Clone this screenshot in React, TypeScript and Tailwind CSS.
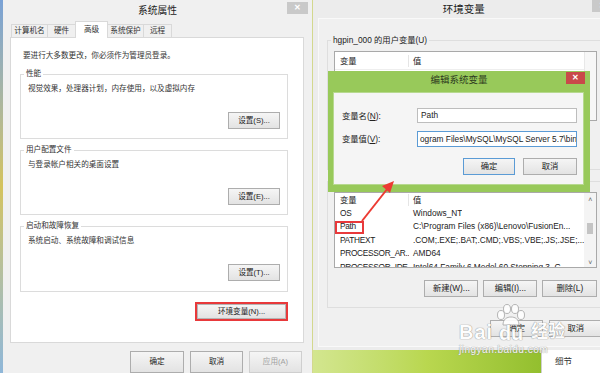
import React from "react";

const font = "font-['Liberation_Sans','Noto_Sans_CJK_SC',sans-serif]";

const Btn = (props: {
  children: React.ReactNode;
  className?: string;
  primary?: boolean;
  disabled?: boolean;
}) => {
  const { children, className = "", primary, disabled } = props;
  return (
    <div
      className={`flex shrink-0 items-center justify-center border bg-linear-to-b from-[#f5f5f5] to-[#e3e3e3] ${
        primary ? "border-[#5b9bd5]" : "border-[#adadad]"
      } ${disabled ? "text-[#a0a0a0]" : "text-[#222]"} ${className}`}
    >
      {children}
    </div>
  );
};

const Group = (props: {
  label: string;
  text: string;
  button: string;
  h: string;
}) => (
  <div className={`relative ml-[9px] mr-[15px] border border-[#dcdcdc] ${props.h}`}>
    <span className="absolute -top-[7px] left-[3px] bg-white px-[2px] leading-[12px] text-[#333]">
      {props.label}
    </span>
    <div className="pl-[7px] pt-[8px] leading-[12px] text-[#333]">{props.text}</div>
    <div className="mt-[17px] flex justify-end pr-[7px]">
      <Btn className="h-[17px] w-[52px]">{props.button}</Btn>
    </div>
  </div>
);

function LeftWindow() {
  const tabs = [
    { t: "计算机名", w: "w-[37px]" },
    { t: "硬件", w: "w-[29px]" },
    { t: "高级", w: "w-[33px]", on: true },
    { t: "系统保护", w: "w-[37px]" },
    { t: "远程", w: "w-[29px]" },
  ];
  return (
    <div className="flex w-[310px] shrink-0 flex-col border-r border-[#d3d88e] bg-[#f0f0f0] text-[7.6px]">
      <div className="flex h-[22px] items-start">
        <div className="flex-1 pl-[25px] pt-[5px] text-center text-[9.8px] leading-[12px] text-[#222]">
          系统属性
        </div>
        <div className="mr-[4px] mt-[2px] flex h-[12px] w-[21px] items-center justify-center bg-[#c9c9c9] text-[8px] font-bold text-white">
          ✕
        </div>
      </div>
      <div className="mt-[4px] flex h-[15px] items-end pl-[9px]">
        {tabs.map((tab) =>
          tab.on ? (
            <div
              key={tab.t}
              className={`relative z-10 -mb-px -ml-px flex h-[17px] items-start justify-center border-x border-t border-[#d9d9d9] bg-white pt-[2px] leading-[12px] text-[#333] ${tab.w}`}
            >
              {tab.t}
            </div>
          ) : (
            <div
              key={tab.t}
              className={`-ml-px flex h-[13px] items-center justify-center border-x border-t border-[#d9d9d9] bg-[#f0f0f0] leading-[12px] text-[#333] ${tab.w}`}
            >
              {tab.t}
            </div>
          )
        )}
      </div>
      <div className="ml-[7px] mr-[8px] h-[306px] shrink-0 border border-[#d9d9d9] bg-white">
        <div className="pl-[12px] pt-[12px] leading-[12px] text-[#333]">
          要进行大多数更改，你必须作为管理员登录。
        </div>
        <div className="mt-[12px] flex flex-col gap-[11px]">
          <Group label="性能" text="视觉效果，处理器计划，内存使用，以及虚拟内存" button="设置(S)..." h="h-[65px]" />
          <Group label="用户配置文件" text="与登录帐户相关的桌面设置" button="设置(E)..." h="h-[65px]" />
          <Group label="启动和故障恢复" text="系统启动、系统故障和调试信息" button="设置(T)..." h="h-[66px]" />
        </div>
        <div className="mt-[10px] flex justify-end pr-[15px]">
          <div className="h-[19px] w-[93px] border-2 border-[#e8393b]">
            <Btn className="h-full w-full border-[#b5b5b5]">环境变量(N)...</Btn>
          </div>
        </div>
      </div>
      <div className="mt-[8px] flex justify-end gap-[6px] pr-[10px]">
        <Btn className="h-[22px] w-[54px]">确定</Btn>
        <Btn className="h-[22px] w-[53px]">取消</Btn>
        <Btn className="h-[22px] w-[53px] border-[#cfcfcf]" disabled>
          应用(A)
        </Btn>
      </div>
    </div>
  );
}

const sysVars = [
  ["OS", "Windows_NT"],
  ["Path", "C:\\Program Files (x86)\\Lenovo\\FusionEn..."],
  ["PATHEXT", ".COM;.EXE;.BAT;.CMD;.VBS;.VBE;.JS;.JSE;..."],
  ["PROCESSOR_AR...", "AMD64"],
  ["PROCESSOR_IDE...", "Intel64 Family 6 Model 60 Stepping 3, G..."],
];

function ListHeader() {
  return (
    <div className="flex h-[13px] shrink-0 items-center leading-[12px] text-[#222]">
      <div className="w-[74px] border-r border-[#e5e5e5] pl-[5px]">变量</div>
      <div className="pl-[4px]">值</div>
    </div>
  );
}

function RightColumn() {
  return (
    <div className="flex flex-1 flex-col text-[8.3px]">
      <div className="flex h-[350px] shrink-0 flex-col bg-[#ececec]">
        <div className="flex h-[18px] items-start">
          <div className="flex-1 pl-[22px] pt-[3px] text-center text-[10.5px] leading-[12px] text-[#222]">
            环境变量
          </div>
          <div className="mr-[2px] flex h-[12px] w-[20px] items-center justify-center bg-[#c9c9c9] text-[8px] font-bold text-white">
            ✕
          </div>
        </div>
        <div className="mb-[3px] ml-[5px] mr-[4px] flex flex-1 flex-col border border-[#f9f9f9] bg-[#f0f0f0]">
          <div className="relative ml-[8px] mr-[5px] mt-[21px] h-[130px] shrink-0 border border-[#dedede]">
            <span className="absolute -top-[7px] left-[3px] bg-[#f0f0f0] px-[2px] leading-[12px] text-[#222]">
              hgpin_000 的用户变量(U)
            </span>
            <div className="mx-[6px] mt-[10px] flex h-[70px] border border-[#a9a9a9] bg-white">
              <div className="flex-1">
                <div className="border-b border-[#eeeeee] py-[2px]">
                  <ListHeader />
                </div>
              </div>
              <div className="w-[12px] border-l border-[#e8e8e8] bg-[#f7f7f7]" />
            </div>
          </div>
          <div className="ml-[8px] mr-[5px] mt-[11px] h-[127px] shrink-0 border border-[#dedede]">
            <div className="mx-[6px] mt-[10px] flex h-[76px] overflow-hidden border border-[#a9a9a9] bg-white">
              <div className="flex min-w-0 flex-1 flex-col">
                <ListHeader />
                {sysVars.map(([k, v]) => (
                  <div key={k} className="flex h-[13.5px] shrink-0 items-center whitespace-nowrap leading-[12px] text-[#222]">
                    <div className="w-[74px] shrink-0 overflow-hidden pl-[5px] tracking-[-0.3px]">{k}</div>
                    <div className="overflow-hidden pl-[4px]">{v}</div>
                  </div>
                ))}
              </div>
              <div className="flex w-[12px] flex-col items-center bg-[#f4f4f4] text-[7px] leading-[8px] text-[#606060]">
                <div className="mt-[3px]">˄</div>
                <div className="mt-[19px] h-[11px] w-[6px] bg-[#c4c4c4]" />
                <div className="mt-[25px]">˅</div>
              </div>
            </div>
            <div className="mt-[12px] flex justify-end gap-[5px] pr-[6px]">
              <Btn className="h-[17px] w-[54px]">新建(W)...</Btn>
              <Btn className="h-[17px] w-[54px]">编辑(I)...</Btn>
              <Btn className="h-[17px] w-[55px]">删除(L)</Btn>
            </div>
          </div>
          <div className="mt-[12px] flex justify-end gap-[6px] pr-[7px]">
            <Btn className="h-[17px] w-[53px]">确定</Btn>
            <Btn className="h-[17px] w-[53px]">取消</Btn>
          </div>
        </div>
      </div>
      <div className="flex flex-1">
        <div className="w-[228px] bg-linear-to-r from-[#d3e68f] via-[#b9d74f] to-[#93bf2e]" />
        <div className="flex-1 border-l border-[#cfcfcf] bg-white pl-[13px] pt-[5px] text-[8.5px] leading-[12px] text-[#333]">
          细节
        </div>
      </div>
    </div>
  );
}

function EditDialog() {
  return (
    <div className="absolute left-[328px] top-[71px] flex h-[121px] w-[262px] flex-col bg-[#98c95a] text-[8.3px]">
      <div className="flex h-[21px] items-start">
        <div className="flex-1 pl-[24px] pt-[3px] text-center text-[9.5px] leading-[12px] text-[#2d3a20]">
          编辑系统变量
        </div>
        <div className="mr-[5px] mt-[1px] flex h-[12px] w-[19px] items-center justify-center bg-[#c9494a] text-[8px] font-bold text-white">
          ✕
        </div>
      </div>
      <div className="mb-[7px] ml-[5px] mr-[6px] flex-1 border border-[#b7d98f] bg-[#f5f5f5] pl-[8px]">
        <div className="mt-[15px] flex items-center">
          <div className="w-[75px] leading-[12px] text-[#222]">
            变量名(<u>N</u>):
          </div>
          <div className="flex h-[15px] w-[160px] items-center border border-[#bdbdbd] bg-white pl-[3px] text-[#222]">
            Path
          </div>
        </div>
        <div className="mt-[8px] flex items-center">
          <div className="w-[75px] leading-[12px] text-[#222]">
            变量值(<u>V</u>):
          </div>
          <div className="flex h-[16px] w-[160px] items-center overflow-hidden whitespace-nowrap border border-[#5b9bd5] bg-white pl-[2px] text-[#222]">
            <span>ogram Files\MySQL\MySQL Server 5.7\bi</span>
            <span className="h-[11px] w-px bg-black" />
            <span>n</span>
          </div>
        </div>
        <div className="mt-[11px] flex justify-end gap-[8px] pr-[6px]">
          <Btn className="h-[17px] w-[52px]" primary>
            确定
          </Btn>
          <Btn className="h-[17px] w-[54px]">取消</Btn>
        </div>
      </div>
    </div>
  );
}

function Watermark() {
  return (
    <div className="pointer-events-none absolute left-[459px] top-[304px] flex flex-col text-white opacity-90 [text-shadow:0_0_1px_#8a8a8a,0_0_1px_#8a8a8a]">
      <div className="flex items-end">
        <span className="text-[20px] font-bold leading-[20px] tracking-[1px]">Bai</span>
        <div className="relative flex flex-col items-center">
          <svg width="36" height="22" viewBox="0 0 36 22" className="mb-[-2px]">
            <g fill="#fff" stroke="#9a9a9a" strokeWidth="0.8">
              <ellipse cx="8" cy="11" rx="3.5" ry="4.5" />
              <ellipse cx="14" cy="5" rx="3.5" ry="4.5" />
              <ellipse cx="22" cy="5" rx="3.5" ry="4.5" />
              <ellipse cx="28" cy="11" rx="3.5" ry="4.5" />
              <path d="M10 21 C10 15 14 13 18 13 C22 13 26 15 26 21 Z" />
            </g>
          </svg>
          <span className="text-[20px] font-bold leading-[18px]">du</span>
        </div>
        <span className="ml-[2px] text-[17px] font-bold leading-[20px]">经验</span>
      </div>
      <div className="mt-[2px] text-[10px] leading-[11px] tracking-[0.5px]">jingyan.baidu.com</div>
    </div>
  );
}

export default function App() {
  return (
    <div className={`relative flex h-[373px] w-[600px] overflow-hidden bg-[#f0f0f0] ${font}`}>
      <div className="w-[3px] shrink-0 bg-linear-to-b from-[#7aa2d6] via-[#d4c35c] to-[#8fb7d9]" />
      <LeftWindow />
      <RightColumn />
      <EditDialog />
      <svg className="pointer-events-none absolute left-0 top-0" width="600" height="373">
        <line x1="362" y1="221" x2="388" y2="188" stroke="#ec3b33" strokeWidth="2" />
        <polygon points="394,181 382,186 390,193" fill="#ec3b33" />
      </svg>
      <div className="pointer-events-none absolute left-[335px] top-[221px] h-[13px] w-[29px] border-2 border-[#e8393b]" />
      <Watermark />
    </div>
  );
}
